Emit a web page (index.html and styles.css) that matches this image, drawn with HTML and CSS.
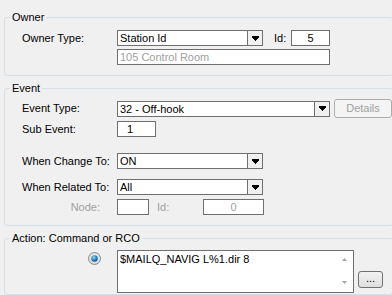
FILE: index.html
```html
<!DOCTYPE html>
<html>
<head>
  <meta charset="UTF-8">
  <title>Event Action</title>
  <link rel="stylesheet" href="styles.css">
</head>
<body>
  <div class="dialog">
    <fieldset class="group">
      <legend>Owner</legend>
      <div class="row">
        <span class="label">Owner Type:</span>
        <div class="combo w146">
          <span class="combo-text">Station Id</span>
          <span class="combo-btn"><svg width="7" height="5" viewBox="0 0 7 5"><path d="M0 0h7v2h-7z M1 2h5v1h-5z M2 3h3v1h-3z M3 4h1v1h-1z" fill="#000"/></svg></span>
        </div>
        <span class="label-id">Id:</span>
        <div class="edit w39 center">5</div>
      </div>
      <div class="row mt3">
        <span class="label"></span>
        <div class="edit w213 disabled">105 Control Room</div>
      </div>
    </fieldset>

    <fieldset class="group">
      <legend>Event</legend>
      <div class="row tall">
        <span class="label">Event Type:</span>
        <div class="combo w213">
          <span class="combo-text">32 - Off-hook</span>
          <span class="combo-btn"><svg width="7" height="5" viewBox="0 0 7 5"><path d="M0 0h7v2h-7z M1 2h5v1h-5z M2 3h3v1h-3z M3 4h1v1h-1z" fill="#000"/></svg></span>
        </div>
        <button class="details-btn" disabled>Details</button>
      </div>
      <div class="row mt3">
        <span class="label">Sub Event:</span>
        <div class="edit w39 pad-one">1</div>
      </div>
      <div class="row mt16">
        <span class="label">When Change To:</span>
        <div class="combo w146">
          <span class="combo-text">ON</span>
          <span class="combo-btn"><svg width="7" height="5" viewBox="0 0 7 5"><path d="M0 0h7v2h-7z M1 2h5v1h-5z M2 3h3v1h-3z M3 4h1v1h-1z" fill="#000"/></svg></span>
        </div>
      </div>
      <div class="row mt10">
        <span class="label">When Related To:</span>
        <div class="combo w146">
          <span class="combo-text">All</span>
          <span class="combo-btn"><svg width="7" height="5" viewBox="0 0 7 5"><path d="M0 0h7v2h-7z M1 2h5v1h-5z M2 3h3v1h-3z M3 4h1v1h-1z" fill="#000"/></svg></span>
        </div>
      </div>
      <div class="row mt4">
        <span class="label right grey">Node:</span>
        <div class="edit w32"></div>
        <span class="label-node-id grey">Id:</span>
        <div class="edit w61 center disabled">0</div>
      </div>
    </fieldset>

    <fieldset class="group last">
      <legend>Action: Command or RCO</legend>
      <div class="row action">
        <span class="radio-cell">
          <svg width="13" height="13" viewBox="0 0 13 13">
            <defs>
              <radialGradient id="ring" cx="50%" cy="40%" r="60%">
                <stop offset="0" stop-color="#f6f6f6"/>
                <stop offset="1" stop-color="#d2d2d2"/>
              </radialGradient>
              <radialGradient id="dot" cx="40%" cy="35%" r="70%">
                <stop offset="0" stop-color="#a8dcf8"/>
                <stop offset="0.5" stop-color="#2b8ad2"/>
                <stop offset="1" stop-color="#0c4a85"/>
              </radialGradient>
            </defs>
            <circle cx="6.5" cy="6.5" r="6" fill="url(#ring)" stroke="#8d8f90"/>
            <circle cx="6.5" cy="6.5" r="3.2" fill="url(#dot)"/>
          </svg>
        </span>
        <div class="memo">
          <div class="memo-text">$MAILQ_NAVIG L%1.dir 8</div>
          <div class="memo-scroll">
            <svg width="5" height="3" viewBox="0 0 5 3"><path d="M2.5 0L5 3H0z" fill="#a6a6a6"/></svg>
            <svg width="5" height="3" viewBox="0 0 5 3"><path d="M0 0h5L2.5 3z" fill="#a6a6a6"/></svg>
          </div>
        </div>
        <button class="more-btn">...</button>
      </div>
    </fieldset>
  </div>
</body>
</html>
```

FILE: styles.css
```css
html, body {
  margin: 0;
  overflow: hidden;
  background: #f0f0f0;
}
body {
  width: 392px;
  height: 295px;
  font: 11px/13px "Liberation Sans", Arial, sans-serif;
  color: #000;
}
.dialog {
  padding-top: 11px;
}
.group {
  margin: 0 -1px 6px 4px;
  padding: 6px 0 10px 5px;
  border: 1px solid #d5dfe5;
  border-radius: 3px;
  min-width: 0;
}
.group.last {
  margin-bottom: 0;
  padding-bottom: 1px;
}
legend {
  padding: 0 2px;
  line-height: 13px;
}
.row {
  display: flex;
  align-items: center;
  height: 16px;
  padding-left: 12px;
}
.row.tall {
  height: 19px;
  margin-top: -2px;
}
.mt3 { margin-top: 3px; }
.mt4 { margin-top: 4px; }
.mt10 { margin-top: 10px; }
.mt16 { margin-top: 16px; }
.label {
  width: 95px;
  flex: none;
  white-space: nowrap;
}
.label.right {
  text-align: right;
  padding-right: 17px;
  box-sizing: border-box;
}
.grey {
  color: #a0a0a0;
}
.label-id {
  margin-left: 11px;
  width: 17px;
}
.label-node-id {
  margin-left: 8px;
  width: 46px;
}
.combo {
  display: flex;
  height: 16px;
  box-sizing: border-box;
  border: 1px solid #6f6f6f;
  background: #fff;
}
.combo-text {
  flex: 1;
  padding-left: 2px;
  line-height: 14px;
  overflow: hidden;
  white-space: nowrap;
}
.combo-btn {
  width: 15px;
  box-sizing: border-box;
  border-left: 1px solid #6f6f6f;
  background: #f0f0f0;
  display: flex;
  align-items: center;
  justify-content: center;
}
.edit {
  height: 16px;
  box-sizing: border-box;
  border: 1px solid #6f6f6f;
  background: #fff;
  padding: 0 2px;
  line-height: 14px;
  white-space: nowrap;
}
.edit.center {
  text-align: center;
}
.edit.disabled {
  color: #a0a0a0;
}
.edit.pad-one {
  padding-left: 9px;
}
.w32 { width: 32px; }
.w39 { width: 39px; }
.w61 { width: 61px; }
.w146 { width: 146px; }
.w213 { width: 213px; }
.details-btn {
  margin-left: 4px;
  width: 58px;
  height: 19px;
  padding: 0;
  border: 1px solid #adadad;
  border-radius: 3px;
  background: #f4f4f4;
  color: #a0a0a0;
  font: inherit;
}
.row.action {
  height: auto;
  align-items: flex-start;
  margin-top: -1px;
}
.radio-cell {
  width: 95px;
  flex: none;
  display: flex;
  justify-content: flex-end;
  padding-right: 16px;
  padding-top: 2px;
  box-sizing: border-box;
}
.memo {
  display: flex;
  width: 237px;
  height: 43px;
  box-sizing: border-box;
  border: 1px solid #6f6f6f;
  background: #fff;
}
.memo-text {
  flex: 1;
  padding: 2px 2px 0;
  white-space: nowrap;
}
.memo-scroll {
  width: 17px;
  display: flex;
  flex-direction: column;
  align-items: center;
  justify-content: space-between;
  padding: 7px 0 8px;
}
.more-btn {
  align-self: flex-end;
  margin: 0 0 5px 4px;
  width: 25px;
  height: 17px;
  padding: 0 0 4px;
  border: 1px solid #707070;
  border-radius: 3px;
  background: linear-gradient(#f2f2f2, #dedede);
  font: inherit;
  line-height: 8px;
}
```
